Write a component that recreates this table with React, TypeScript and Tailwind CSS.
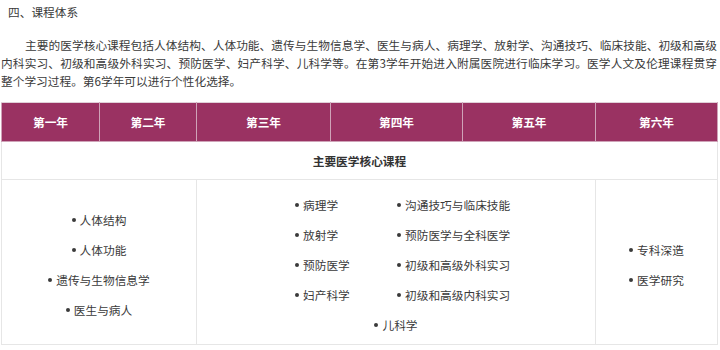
import React from "react";

const font = { fontFamily: '"Noto Sans CJK SC", "Noto Sans", sans-serif' };

function Item({ children }: { children: React.ReactNode }) {
  return (
    <div className="h-[30px] leading-[30px] whitespace-nowrap flex items-center">
      <span className="inline-block shrink-0 w-[4px] h-[4px] rounded-full bg-[#3a3a3a] mr-[4px]" />
      <span className="shrink-0">{children}</span>
    </div>
  );
}

export default function App() {
  const years = ["第一年", "第二年", "第三年", "第四年", "第五年", "第六年"];
  const widths = ["w-[98px]", "w-[97px]", "w-[134px]", "w-[132px]", "w-[133px]", "w-[122px]"];
  return (
    <div className="w-[720px] h-[350px] bg-white text-[#3a3a3a] overflow-hidden" style={font}>
      <div className="text-[11.7px] leading-[18px] pl-[8px] pt-[3px] h-[36px]">四、课程体系</div>
      <div className="text-[11.7px] leading-[18px] pl-[1px] pr-[3px]">
        <div className="text-justify [text-align-last:justify] indent-[24px] whitespace-nowrap">
          主要的医学核心课程包括人体结构、人体功能、遗传与生物信息学、医生与病人、病理学、放射学、沟通技巧、临床技能、初级和高级
        </div>
        <div className="text-justify [text-align-last:justify] whitespace-nowrap">
          内科实习、初级和高级外科实习、预防医学、妇产科学、儿科学等。在第3学年开始进入附属医院进行临床学习。医学人文及伦理课程贯穿
        </div>
        <div>整个学习过程。第6学年可以进行个性化选择。</div>
      </div>
      <div className="pl-[1px] pt-[12px]">
        <table className="border-collapse table-fixed w-[716px] text-[11.7px]">
          <thead>
            <tr className="h-[39px] bg-[#9a3262]">
              {years.map((y, i) => (
                <th
                  key={y}
                  className={`${widths[i]} border border-[#cfa3b8] border-t-[#e0d0d8] text-white font-bold text-center p-0`}
                >
                  {y}
                </th>
              ))}
            </tr>
          </thead>
          <tbody>
            <tr className="h-[38px]">
              <td colSpan={6} className="border border-[#e6e6e6] text-center font-semibold text-[#333] p-0">
                主要医学核心课程
              </td>
            </tr>
            <tr className="h-[165px]">
              <td colSpan={2} className="border border-[#e6e6e6] p-0 align-middle">
                <div className="flex flex-col items-center pt-[6px]">
                  <Item>人体结构</Item>
                  <Item>人体功能</Item>
                  <Item>遗传与生物信息学</Item>
                  <Item>医生与病人</Item>
                </div>
              </td>
              <td colSpan={3} className="border border-[#e6e6e6] p-0 align-middle">
                <div className="flex flex-col items-center pt-[6px]">
                  <div className="grid grid-cols-[102px_102px] pl-[2px]">
                    <Item>病理学</Item>
                    <Item>沟通技巧与临床技能</Item>
                    <Item>放射学</Item>
                    <Item>预防医学与全科医学</Item>
                    <Item>预防医学</Item>
                    <Item>初级和高级外科实习</Item>
                    <Item>妇产科学</Item>
                    <Item>初级和高级内科实习</Item>
                  </div>
                  <Item>儿科学</Item>
                </div>
              </td>
              <td className="border border-[#e6e6e6] p-0 align-middle">
                <div className="flex flex-col items-center pt-[6px]">
                  <Item>专科深造</Item>
                  <Item>医学研究</Item>
                </div>
              </td>
            </tr>
          </tbody>
        </table>
      </div>
    </div>
  );
}
